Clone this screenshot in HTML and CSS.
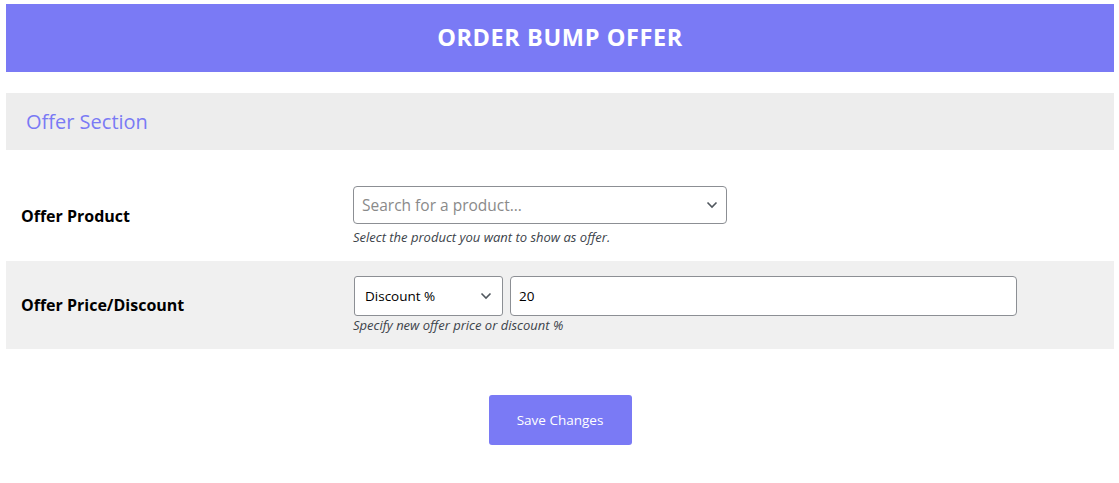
FILE: index.html
```html
<!DOCTYPE html>
<html>
<head>
<meta charset='utf-8' />
<title>Order Bump Offer</title>
<link rel="stylesheet" href="styles.css">
</head>
<body>
<div class="wrap">
  <h1 class="page-title">ORDER BUMP OFFER</h1>

  <h2 class="section-title">Offer Section</h2>

  <div class="form-table">
    <div class="form-row">
      <label class="row-label">Offer Product</label>
      <div class="row-field">
        <div class="product-search">
          <span class="placeholder">Search for a product&hellip;</span>
          <svg class="chevron" width="12" height="8" viewBox="0 0 12 8"><path d="M1.5 1.5 L6 6 L10.5 1.5" fill="none" stroke="#50575e" stroke-width="1.6"/></svg>
        </div>
        <p class="description">Select the product you want to show as offer.</p>
      </div>
    </div>
    <div class="form-row alt">
      <label class="row-label">Offer Price/Discount</label>
      <div class="row-field">
        <div class="price-fields">
          <div class="price-type">
            <span>Discount %</span>
            <svg class="chevron" width="12" height="8" viewBox="0 0 12 8"><path d="M1.5 1.5 L6 6 L10.5 1.5" fill="none" stroke="#50575e" stroke-width="1.6"/></svg>
          </div>
          <input class="price-value" type="text" value="20" />
        </div>
        <p class="description tight">Specify new offer price or discount %</p>
      </div>
    </div>
  </div>

  <div class="actions">
    <button class="save-button" type="button">Save Changes</button>
  </div>
</div>
</body>
</html>
```

FILE: styles.css
```css
body {
  margin: 0;
  font-family: "Open Sans", "Noto Sans", sans-serif;
  color: #1d2327;
  background: #fff;
}
.wrap {
  padding: 4px 5px 0 6px;
}
.page-title {
  margin: 0;
  height: 68px;
  line-height: 67px;
  background: #7a7af5;
  color: #fff;
  text-align: center;
  font-size: 23.5px;
  font-weight: 700;
  letter-spacing: 0.6px;
}
.section-title {
  margin: 21px 0 0;
  height: 57px;
  line-height: 57px;
  padding: 0 20px;
  background: #ededed;
  color: #7a7af5;
  font-size: 20px;
  font-weight: 400;
}
.form-table {
  margin-top: 21px;
}
.form-row {
  display: grid;
  grid-template-columns: 347px 1fr;
  align-items: center;
  padding: 15px 0 16px;
}
.form-row.alt {
  background: #f0f0f0;
}
.row-label {
  padding-left: 15px;
  font-size: 16px;
  font-weight: 700;
  color: #000;
}
.description {
  margin: 5px 0 0;
  line-height: 16px;
  font-size: 13px;
  font-style: italic;
  color: #3c434a;
}
.description.tight {
  margin-top: 1px;
}
.product-search {
  width: 356px;
  height: 36px;
  border: 1px solid #8c8f94;
  border-radius: 4px;
  background: #fff;
  display: flex;
  align-items: center;
  justify-content: space-between;
  padding: 0 8px;
}
.placeholder {
  color: #8a8a8a;
  font-size: 15.5px;
}
.price-fields {
  display: flex;
  gap: 7px;
  padding-left: 1px;
}
.price-type {
  width: 127px;
  height: 38px;
  padding: 0 10px;
  border: 1px solid #8c8f94;
  border-radius: 3px;
  background: #fff;
  display: flex;
  align-items: center;
  justify-content: space-between;
  font-size: 13.5px;
  color: #000;
}
.price-value {
  width: 489px;
  height: 38px;
  padding: 0 8px;
  margin: 0;
  border: 1px solid #8c8f94;
  border-radius: 4px;
  font-family: inherit;
  font-size: 13.5px;
  color: #000;
}
.actions {
  display: flex;
  justify-content: center;
  padding-top: 46px;
}
.save-button {
  width: 143px;
  height: 50px;
  border: 0;
  border-radius: 3px;
  background: #7a7af5;
  color: #fff;
  font-family: inherit;
  font-size: 13.5px;
}
```
